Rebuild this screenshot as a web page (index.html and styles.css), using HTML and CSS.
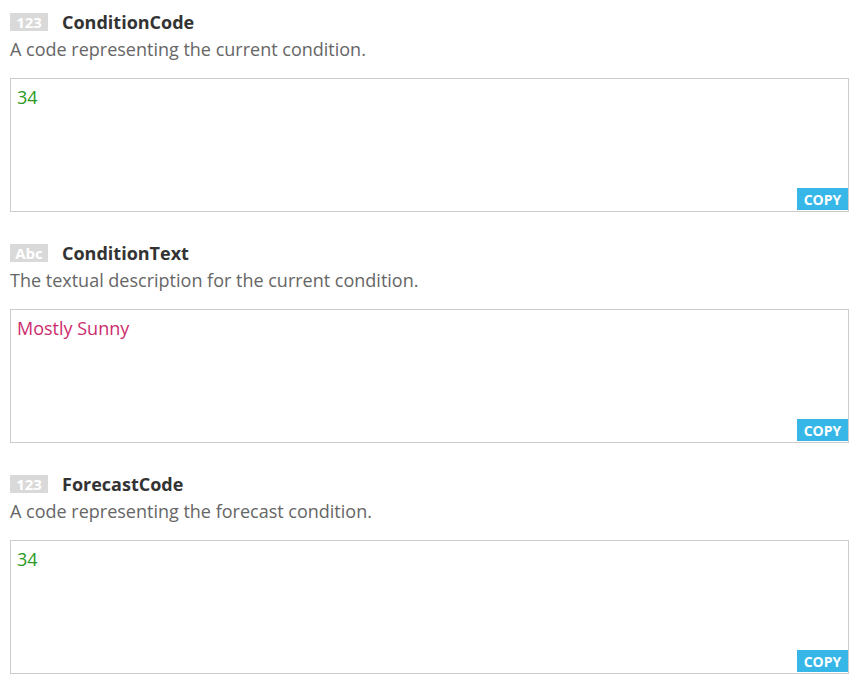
FILE: index.html
```html
<!DOCTYPE html>
<html>
<head>
<meta charset="utf-8">
<link rel="stylesheet" href="styles.css">
</head>
<body>
<div class="page">
  <section class="field">
    <div class="field-head">
      <span class="badge">123</span>
      <span class="name">ConditionCode</span>
    </div>
    <p class="desc">A code representing the current condition.</p>
    <div class="value-box">
      <span class="value num">34</span>
      <button class="copy">COPY</button>
    </div>
  </section>
  <section class="field">
    <div class="field-head">
      <span class="badge">Abc</span>
      <span class="name">ConditionText</span>
    </div>
    <p class="desc">The textual description for the current condition.</p>
    <div class="value-box">
      <span class="value str">Mostly Sunny</span>
      <button class="copy">COPY</button>
    </div>
  </section>
  <section class="field">
    <div class="field-head">
      <span class="badge">123</span>
      <span class="name">ForecastCode</span>
    </div>
    <p class="desc">A code representing the forecast condition.</p>
    <div class="value-box">
      <span class="value num">34</span>
      <button class="copy">COPY</button>
    </div>
  </section>
</div>
</body>
</html>
```

FILE: styles.css
```css
html, body {
  margin: 0;
  padding: 0;
  background: #ffffff;
}
body {
  font-family: "Open Sans", "Liberation Sans", sans-serif;
}
.page {
  padding: 10px 12px 0 10px;
  display: flex;
  flex-direction: column;
  gap: 29px;
}
.field {
  display: flex;
  flex-direction: column;
}
.field-head {
  display: flex;
  align-items: center;
  height: 24px;
  gap: 14px;
}
.badge {
  display: inline-flex;
  align-items: center;
  justify-content: center;
  width: 38px;
  height: 18px;
  background: #d9d9d9;
  color: #ffffff;
  font-size: 15px;
  font-weight: 700;
  line-height: 18px;
}
.name {
  font-size: 18px;
  font-weight: 700;
  color: #333333;
  line-height: 24px;
}
.desc {
  margin: 3px 0 0 0;
  font-size: 18px;
  line-height: 24px;
  color: #666666;
}
.value-box {
  position: relative;
  margin-top: 17px;
  border: 1px solid #cccccc;
  padding: 6px 6px;
  box-sizing: border-box;
  height: 134px;
}
.value {
  font-size: 18px;
  line-height: 24px;
}
.value.num {
  color: #2a9a24;
}
.value.str {
  color: #cc2c6e;
}
.copy {
  position: absolute;
  right: 0;
  bottom: 1px;
  width: 51px;
  height: 22px;
  border: 0;
  padding: 0;
  background: #36b7e8;
  color: #ffffff;
  font-family: "Open Sans", "Liberation Sans", sans-serif;
  font-weight: 700;
  font-size: 14px;
}
```
